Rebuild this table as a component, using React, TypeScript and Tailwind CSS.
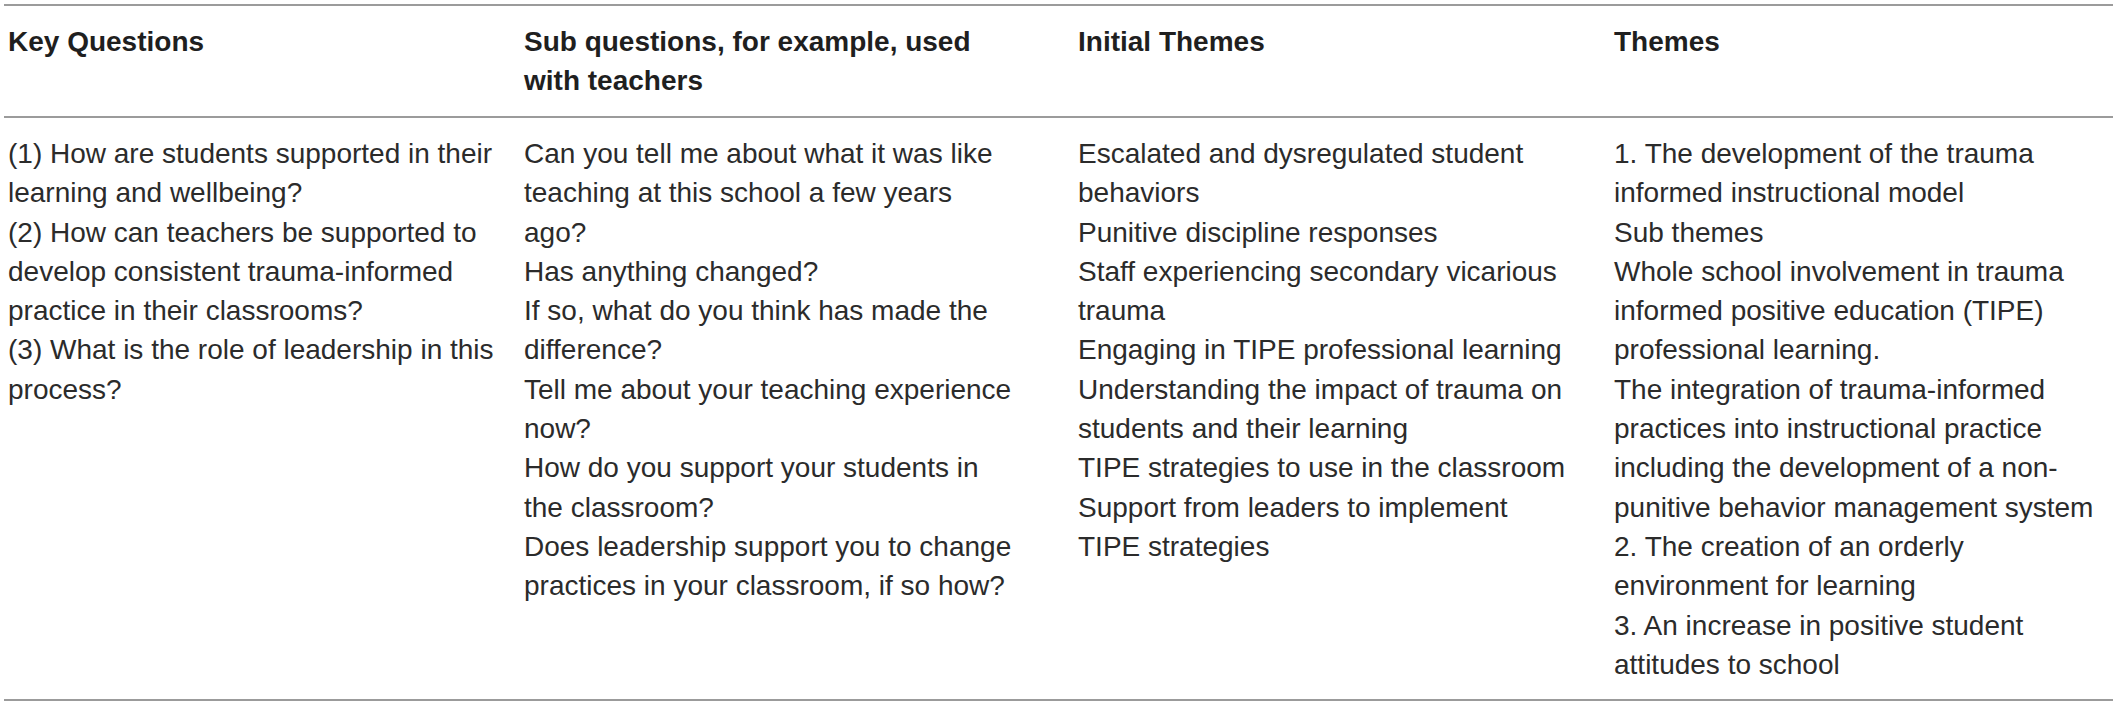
import React from 'react';

type Column = {
  title: string[];
  lines: string[];
};

const columns: Column[] = [
  {
    title: ['Key Questions'],
    lines: [
      '(1) How are students supported in their',
      'learning and wellbeing?',
      '(2) How can teachers be supported to',
      'develop consistent trauma-informed',
      'practice in their classrooms?',
      '(3) What is the role of leadership in this',
      'process?',
    ],
  },
  {
    title: ['Sub questions, for example, used', 'with teachers'],
    lines: [
      'Can you tell me about what it was like',
      'teaching at this school a few years',
      'ago?',
      'Has anything changed?',
      'If so, what do you think has made the',
      'difference?',
      'Tell me about your teaching experience',
      'now?',
      'How do you support your students in',
      'the classroom?',
      'Does leadership support you to change',
      'practices in your classroom, if so how?',
    ],
  },
  {
    title: ['Initial Themes'],
    lines: [
      'Escalated and dysregulated student',
      'behaviors',
      'Punitive discipline responses',
      'Staff experiencing secondary vicarious',
      'trauma',
      'Engaging in TIPE professional learning',
      'Understanding the impact of trauma on',
      'students and their learning',
      'TIPE strategies to use in the classroom',
      'Support from leaders to implement',
      'TIPE strategies',
    ],
  },
  {
    title: ['Themes'],
    lines: [
      '1. The development of the trauma',
      'informed instructional model',
      'Sub themes',
      'Whole school involvement in trauma',
      'informed positive education (TIPE)',
      'professional learning.',
      'The integration of trauma-informed',
      'practices into instructional practice',
      'including the development of a non-',
      'punitive behavior management system',
      '2. The creation of an orderly',
      'environment for learning',
      '3. An increase in positive student',
      'attitudes to school',
    ],
  },
];

const Lines = ({ lines }: { lines: string[] }) => (
  <div>
    {lines.map((line, i) => (
      <div key={i} className="whitespace-nowrap">
        {line}
      </div>
    ))}
  </div>
);

const App = () => {
  return (
    <div className="w-[2117px] h-[706px] bg-white pt-[4px] font-['Liberation_Sans',Arial,sans-serif] text-[28px] text-[#2b2b2b]">
      <div className="mx-[4px]">
        <div className="border-t-2 border-[#9b9b9b] py-[16px] pl-[4px]">
          <div className="grid grid-cols-[516px_554px_536px_1fr] font-bold leading-[39px] text-[#1f1f1f]">
            {columns.map((col) => (
              <Lines key={col.title[0]} lines={col.title} />
            ))}
          </div>
        </div>
        <div className="border-t-2 border-[#9b9b9b] pt-[16px] pb-[15px] pl-[4px]">
          <div className="grid grid-cols-[516px_554px_536px_1fr] leading-[39.3px]">
            {columns.map((col) => (
              <Lines key={col.title[0]} lines={col.lines} />
            ))}
          </div>
        </div>
        <div className="border-t-2 border-[#9b9b9b]" />
      </div>
    </div>
  );
};

export default App;
